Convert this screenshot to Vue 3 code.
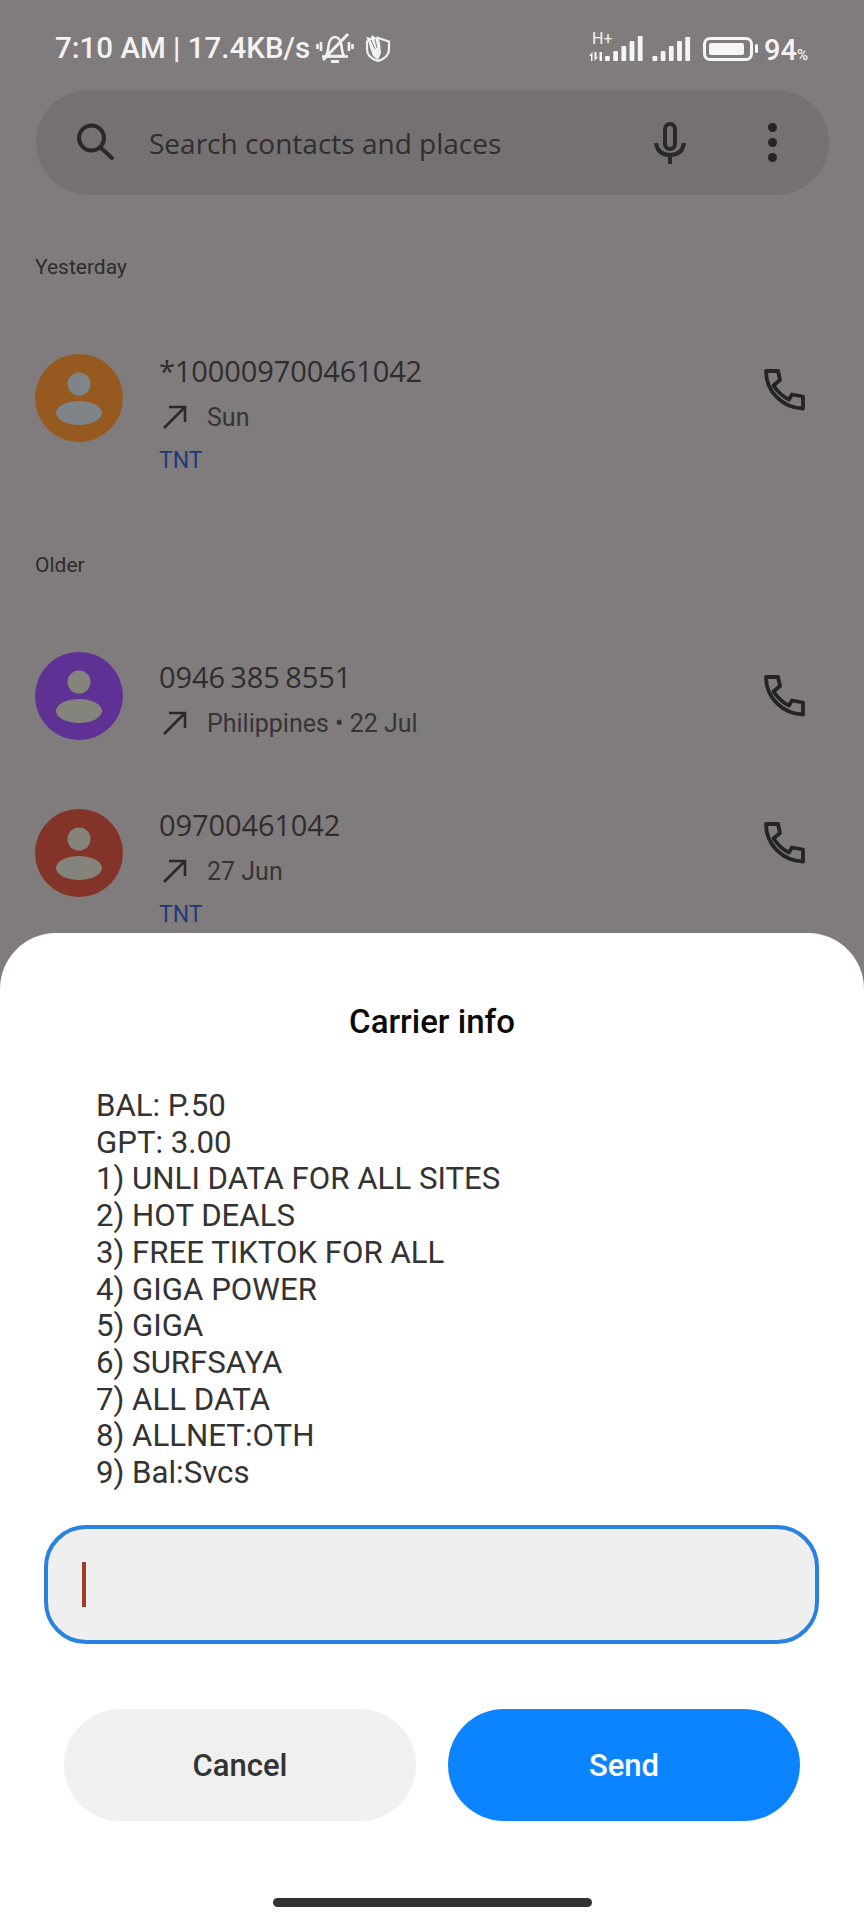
<script setup>
const rows = [
  { id: 1, name: '*100009700461042', sub: 'Sun', tnt: true, color: '#96591f', inner: '#7e8488', section: 'Yesterday' },
  { id: 2, name: '0946 385 8551', sub: 'Philippines • 22 Jul', tnt: false, color: '#5f3194', inner: '#84847c', section: 'Older' },
  { id: 3, name: '09700461042', sub: '27 Jun', tnt: true, color: '#843329', inner: '#84847c' },
]
const lines = ['BAL: P.50', 'GPT: 3.00', '1) UNLI DATA FOR ALL SITES', '2) HOT DEALS', '3) FREE TIKTOK FOR ALL', '4) GIGA POWER', '5) GIGA', '6) SURFSAYA', '7) ALL DATA', '8) ALLNET:OTH', '9) Bal:Svcs']
const bars = [0, 1, 2, 3, 4]
</script>

<template>
  <div class="screen">
    <header class="status">
      <div class="status-left">
        <span class="time">7:10 AM | 17.4KB/s</span>
        <svg class="bell" width="38" height="34" viewBox="0 0 38 34" fill="none" stroke="#f2f0f0" stroke-width="2.600">
          <path d="M10 25c2-3 2-5 2.500-10 .5-5 3-9 6.500-9s6 4 6.500 9c.5 5 .5 7 2.500 10z" />
          <path d="M6 25.500h26" />
          <path d="M15 30.500h8" stroke-width="3" />
          <path d="M7 29 32 3" stroke-width="3" />
          <path d="M5 11v9M1.500 13v5M33 11v9M36.500 13v5" />
        </svg>
        <svg class="shield" width="28" height="28" viewBox="0 0 28 28">
          <path d="M14 4l11 3.500v8c0 6-5 9.500-11 11.500C8 25 3 21.500 3 15.500V7.500z" fill="none" stroke="#f2f0f0" stroke-width="2.200" />
          <path d="M2 3l5 1 1-3 4 3 2-2 2 7 1 10-3 7-5-4-3-8-1-5z" fill="#f2f0f0" />
          <path d="M7 6l4 9M11 5l2 9" stroke="#8a8687" stroke-width="1" fill="none" />
        </svg>
      </div>
      <div class="status-right">
        <div class="signal">
          <span class="hplus">H+</span>
          <svg width="55" height="30" viewBox="0 0 55 30" fill="#f6f4f4">
            <path d="M0 24l3.500-4v9H2v-5zM5.500 20v9l3.500-4H7.500v-5zM10.500 20h2.500v9h-2.500z" />
            <rect v-for="b in bars" :key="b" :x="16 + b * 8.200" :y="24 - b * 5" width="4.800" :height="5 + b * 5" rx="1" />
          </svg>
        </div>
        <svg width="39" height="25" viewBox="0 0 39 25" fill="#f6f4f4">
          <rect v-for="b in bars" :key="b" :x="0.500 + b * 8.200" :y="19 - b * 5" width="4.800" :height="5 + b * 5" rx="1" />
        </svg>
        <div class="battery"><span class="battery-fill"></span></div>
        <span class="pct">94<small>%</small></span>
      </div>
    </header>

    <div class="search">
      <svg width="44" height="44" viewBox="0 0 44 44" fill="none" stroke="#2b282a" stroke-width="4" stroke-linecap="round">
        <circle cx="17.500" cy="17" r="12.500" />
        <path d="M27 27l11 10" />
      </svg>
      <span class="search-text">Search contacts and places</span>
      <svg class="mic" width="36" height="44" viewBox="0 0 36 44" fill="none" stroke="#2b282a" stroke-width="4">
        <rect x="13" y="3" width="10" height="25" rx="5" />
        <path d="M4 22c1 8 6 12 14 12s13-4 14-12" />
        <path d="M18 34v9" />
      </svg>
      <div class="dots"><i></i><i></i><i></i></div>
    </div>

    <section v-for="row in rows" :key="row.id" :class="['block', 'block-' + row.id]">
      <h2 v-if="row.section" class="section">{{ row.section }}</h2>
      <div class="row">
        <svg class="avatar" width="88" height="88" viewBox="0 0 88 88">
          <circle cx="44" cy="44" r="44" :fill="row.color" />
          <circle cx="44" cy="30" r="11.500" :fill="row.inner" />
          <ellipse cx="44" cy="59" rx="23" ry="12" :fill="row.inner" />
        </svg>
        <div class="info">
          <div class="name">{{ row.name }}</div>
          <div class="sub">
            <svg width="28" height="28" viewBox="0 0 28 28" fill="none" stroke="#2b282a" stroke-width="2.600">
              <path d="M5 25 25 5M10 4h16v15" />
            </svg>
            <span>{{ row.sub }}</span>
          </div>
          <div v-if="row.tnt" class="tnt">TNT</div>
        </div>
        <svg class="phone" width="44" height="44" viewBox="0 0 44 44" fill="none" stroke="#262325" stroke-width="3.800" stroke-linejoin="round">
          <path d="M3 4h12l2 9-6.500 5.500c4 6 9 11 15.500 14l3-5 11 2v12C20 41 3 25 3 4z" />
        </svg>
      </div>
    </section>

    <div class="sheet">
      <h1 class="title">Carrier info</h1>
      <div class="message">
        <div v-for="line in lines" :key="line">{{ line }}</div>
      </div>
      <div class="input"><span class="caret"></span></div>
      <div class="actions">
        <div class="btn cancel">Cancel</div>
        <div class="btn send">Send</div>
      </div>
      <div class="home"></div>
    </div>
  </div>
</template>

<style>
html, body { margin: 0; background: #807c7d; }
</style>

<style scoped>
.screen {
  position: relative;
  width: 864px;
  height: 1920px;
  overflow: hidden;
  background: #807c7d;
  font-family: Roboto, sans-serif;
  color: #2b282a;
}
.status {
  height: 90px;
  box-sizing: border-box;
  padding: 30px 56px 0 55px;
  display: flex;
  justify-content: space-between;
  align-items: flex-start;
  color: #f4f2f2;
}
.status-left { display: flex; align-items: center; gap: 6px; height: 36px; }
.time { font-size: 29.500px; font-weight: 500; line-height: 36px; white-space: nowrap; }
.shield { margin-left: 4px; }
.status-right { display: flex; align-items: flex-end; gap: 8px; height: 32px; }
.signal { position: relative; width: 55px; height: 30px; }
.hplus { position: absolute; left: 3px; top: -1px; font: 400 16px/16px Roboto, sans-serif; color: #f6f4f4; }
.battery {
  width: 50px;
  height: 24px;
  box-sizing: border-box;
  border: 3px solid #f6f4f4;
  border-radius: 7px;
  padding: 3px;
  margin: 0 8px 1px 4px;
  position: relative;
}
.battery::after {
  content: "";
  position: absolute;
  right: -8px;
  top: 4px;
  width: 3px;
  height: 9px;
  border-radius: 2px;
  background: #f6f4f4;
}
.battery-fill { display: block; height: 100%; width: 92%; background: #f6f4f4; border-radius: 2px; }
.pct { font-size: 29px; font-weight: 500; line-height: 30px; margin: 0 0 -3px -5px; white-space: nowrap; }
.pct small { font-size: 15px; line-height: 0; }
.search {
  margin: 0 35px 0 36px;
  height: 105px;
  border-radius: 53px;
  background: #757172;
  display: flex;
  align-items: center;
  padding: 0 52px 0 38px;
}
.search-text { flex: 1; margin-left: 31px; font: 400 28px "Open Sans", sans-serif; color: #302d2f; white-space: nowrap; }
.mic { margin-right: 80px; }
.dots { display: flex; flex-direction: column; gap: 6px; }
.dots i { display: block; width: 9px; height: 9px; border-radius: 50%; background: #262325; }
.section {
  margin: 0;
  padding-left: 35px;
  font: 400 21px Roboto, sans-serif;
  line-height: 28px;
  color: #2e2b2d;
}
.block-1 { padding-top: 58px; }
.block-2 { padding-top: 76px; }
.row {
  display: flex;
  align-items: flex-start;
  padding-left: 35px;
  position: relative;
}
.block-1 .row { margin-top: 72px; }
.block-1 .avatar { margin-top: 1px; }
.block-2 .row { margin-top: 73px; min-height: 155px; }
.block-2 .info { margin-top: 7px; }
.block-3 .avatar { margin-top: 2px; }
.avatar { flex: none; }
.info { margin-left: 36px; flex: 1; }
.name { font: 400 29px "Open Sans", sans-serif; word-spacing: -2px; letter-spacing: -0.1px; line-height: 36px; color: #2f2c2e; white-space: nowrap; }
.sub { display: flex; align-items: center; gap: 20px; margin-top: 10px; height: 36px; font-size: 25px; color: #373436; }
.tnt { font-size: 23px; margin-top: 12px; line-height: 28px; color: #1e3a78; }
.phone { position: absolute; left: 763px; top: 14px; }
.block-2 .phone { top: 21px; }
.block-3 .phone { top: 13px; }
.sheet {
  position: absolute;
  left: 0;
  right: 0;
  bottom: 0;
  height: 987px;
  background: #fff;
  border-radius: 56px 56px 0 0;
}
.title { margin: 0; padding-top: 69px; text-align: center; font: 500 33px Roboto, sans-serif; line-height: 40px; color: #0a0a0a; }
.message { margin: 46px 0 0 96px; font-size: 31.200px; line-height: 36.700px; color: #333; }
.input {
  margin: 33px 45px 0 44px;
  height: 119px;
  box-sizing: border-box;
  border: 4.500px solid #2a82e0;
  border-radius: 42px;
  background: #efefef;
  display: flex;
  align-items: center;
  padding-left: 34px;
}
.caret { width: 4px; height: 45px; background: #a03c28; }
.actions { display: flex; gap: 32px; margin: 65px 64px 0; }
.btn {
  flex: 1;
  height: 112px;
  box-sizing: border-box;
  padding-top: 2px;
  border-radius: 56px;
  display: flex;
  align-items: center;
  justify-content: center;
  font-size: 31px;
  font-weight: 500;
}
.cancel { background: #f0f0f0; color: #333; }
.send { background: #0d84ff; color: #fff; }
.home { width: 319px; height: 9px; border-radius: 5px; background: #333; margin: 77px auto 0; }
</style>
